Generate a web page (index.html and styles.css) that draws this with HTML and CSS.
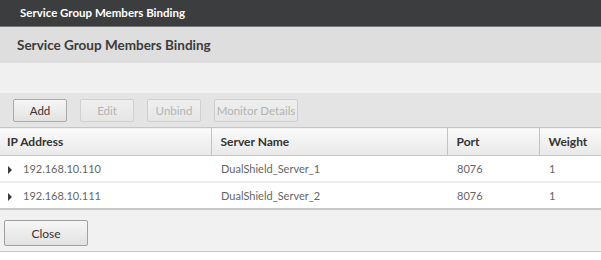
FILE: index.html
```html
<!DOCTYPE html>
<html>
<head>
<meta charset="utf-8">
<link rel="stylesheet" href="styles.css">
</head>
<body>
<div class="dialog">
  <div class="titlebar">Service Group Members Binding</div>
  <div class="heading">Service Group Members Binding</div>
  <div class="spacer"></div>
  <div class="toolbar">
    <button class="btn">Add</button>
    <button class="btn disabled">Edit</button>
    <button class="btn disabled">Unbind</button>
    <button class="btn disabled wide">Monitor Details</button>
  </div>
  <table class="grid">
    <colgroup>
      <col class="k1">
      <col class="k2">
      <col class="k3">
      <col class="k4">
    </colgroup>
    <thead>
      <tr>
        <th>IP Address</th>
        <th>Server Name</th>
        <th>Port</th>
        <th>Weight</th>
      </tr>
    </thead>
    <tbody>
      <tr>
        <td><span class="arrow"></span>192.168.10.110</td>
        <td>DualShield_Server_1</td>
        <td>8076</td>
        <td>1</td>
      </tr>
      <tr>
        <td><span class="arrow"></span>192.168.10.111</td>
        <td>DualShield_Server_2</td>
        <td>8076</td>
        <td>1</td>
      </tr>
    </tbody>
  </table>
  <div class="footer">
    <button class="btn close">Close</button>
  </div>
</div>
</body>
</html>
```
FILE: styles.css
```css
html, body {
  margin: 0;
  padding: 0;
  background: #ffffff;
}
body {
  font-family: Lato, "Open Sans", sans-serif;
  font-size: 11px;
  color: #333;
}
.dialog {
  width: 601px;
  height: 251px;
  border-bottom: 1px solid #c9c9c9;
  background: #f1f1f1;
}
.titlebar {
  height: 26px;
  background: #3c3d3e;
  border-bottom: 1px solid #7a7a7a;
  color: #ffffff;
  font-weight: bold;
  font-size: 11.5px;
  line-height: 26px;
  padding-left: 20px;
}
.heading {
  height: 36px;
  background: #dedede;
  color: #3b3b3b;
  font-weight: bold;
  font-size: 13.5px;
  line-height: 36px;
  padding-left: 17px;
}
.spacer {
  height: 30px;
  background: #f0f0f0;
}
.toolbar {
  height: 34px;
  background: #e4e4e4;
  display: flex;
  align-items: flex-start;
  gap: 13px;
  padding: 6px 0 0 13px;
  box-sizing: border-box;
}
.btn {
  font-family: inherit;
  font-size: 11.5px;
  height: 23px;
  width: 54px;
  border: 1px solid #a9a9a9;
  border-radius: 2px;
  background: linear-gradient(#f6f6f6, #e2e2e2);
  color: #333;
  padding: 0;
  margin: 0;
}
.btn.disabled {
  color: #b3b3b3;
  border-color: #cfcfcf;
  background: linear-gradient(#efefef, #e6e6e6);
}
.btn.wide {
  width: 84px;
}
.grid {
  width: 601px;
  border-collapse: collapse;
  table-layout: fixed;
  background: #ffffff;
  border-top: 1px solid #c6c6c6;
  border-bottom: 2px solid #c8c8c8;
}
.k1 { width: 211px; }
.k2 { width: 236px; }
.k3 { width: 92px; }
.grid th {
  height: 27px;
  text-align: left;
  font-weight: bold;
  font-size: 12px;
  color: #333;
  padding: 0 0 0 9px;
  background: linear-gradient(#fafafa, #e9e9e9);
  border-right: 1px solid #c3c3c3;
  border-bottom: 1px solid #c8c8c8;
}
.grid th:first-child {
  padding-left: 7px;
}
.grid th:last-child {
  border-right: none;
}
.grid td {
  height: 25px;
  color: #666;
  font-size: 11px;
  padding: 0 0 0 10px;
  border-bottom: 2px solid #ececec;
}
.grid td:first-child {
  padding-left: 6px;
}
.grid tr:last-child td {
  border-bottom: none;
}
.arrow {
  display: inline-block;
  width: 0;
  height: 0;
  border-top: 4px solid transparent;
  border-bottom: 4px solid transparent;
  border-left: 4px solid #3a3a3a;
  margin: 0 11px 0 2px;
  vertical-align: -1px;
}
.footer {
  padding: 10px 0 0 4px;
}
.btn.close {
  width: 84px;
  height: 26px;
  font-size: 12px;
  border-color: #9f9f9f;
}
```
